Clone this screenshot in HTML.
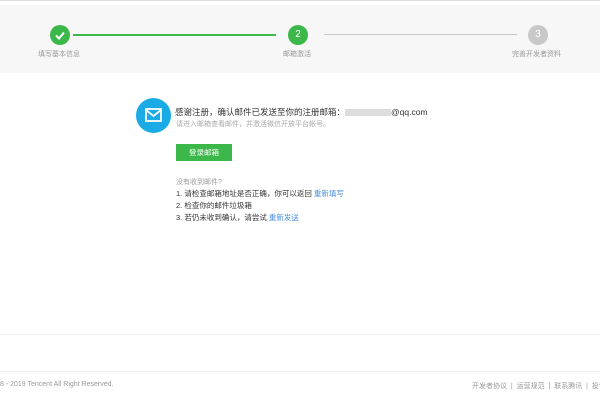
<!DOCTYPE html>
<html><head><meta charset="utf-8"><style>
*{margin:0;padding:0;box-sizing:border-box}
body{width:600px;height:400px;background:#fff;font-family:"Liberation Sans","Noto Sans CJK SC",sans-serif;position:relative;overflow:hidden}
.a{position:absolute;white-space:nowrap}
.c{position:absolute;width:20px;height:20px;border-radius:50%;color:#fff;font-size:10px;text-align:center;line-height:20px}
.lb{position:absolute;font-size:7px;color:#999;white-space:nowrap}
</style></head><body>
<div class="a" style="left:0;top:0;width:600px;height:1px;background:#ddd"></div>
<div class="a" style="left:0;top:5px;width:600px;height:68px;background:#f7f7f7"></div>
<div class="a" style="left:73px;top:34px;width:203px;height:2px;background:#3cb84a"></div>
<div class="a" style="left:324px;top:34px;width:193px;height:1px;background:#c8c8c8"></div>
<div class="c" style="left:50px;top:25px;background:#3cb84a"><svg width="20" height="20" viewBox="0 0 20 20"><path d="M6 10.5l3 3 5-6" stroke="#fff" stroke-width="2" fill="none"/></svg></div>
<div class="c" style="left:288px;top:25px;background:#3cb84a">2</div>
<div class="c" style="left:528px;top:25px;background:#c8c8c8">3</div>
<div class="lb" style="left:38px;top:49px">填写基本信息</div>
<div class="lb" style="left:283px;top:49px">邮箱激活</div>
<div class="lb" style="left:512px;top:49px">完善开发者资料</div>

<div class="a" style="left:136px;top:98px;width:35px;height:35px;border-radius:50%;background:#1aabe7"></div>
<svg class="a" style="left:145px;top:108px" width="17" height="14" viewBox="0 0 17 14"><rect x="1" y="1" width="15" height="12" fill="none" stroke="#fff" stroke-width="1.8"/><path d="M1 2l7.5 6 7.5-6" fill="none" stroke="#fff" stroke-width="1.8"/></svg>
<div class="a" style="left:175px;top:106px;font-size:8.5px;color:#333">感谢注册，确认邮件已发送至你的注册邮箱：<span style="display:inline-block;width:46px;height:7px;background:#ddd;vertical-align:middle"></span>@qq.com</div>
<div class="a" style="left:176px;top:119px;font-size:7px;color:#aaa">请进入邮箱查看邮件，并激活微信开放平台帐号。</div>
<div class="a" style="left:176px;top:144px;width:56px;height:17px;background:#3cb84a;color:#fff;font-size:7.5px;text-align:center;line-height:17px">登录邮箱</div>
<div class="a" style="left:176px;top:177px;font-size:7px;color:#999">没有收到邮件?</div>
<div class="a" style="left:176px;top:188px;font-size:7.5px;color:#333;line-height:12px">1. 请检查邮箱地址是否正确，你可以返回 <span style="color:#4a8fe0">重新填写</span><br>2. 检查你的邮件垃圾箱<br>3. 若仍未收到确认，请尝试 <span style="color:#4a8fe0">重新发送</span></div>

<div class="a" style="left:0;top:334px;width:600px;height:1px;background:#eee"></div>
<div class="a" style="left:0;top:371px;width:600px;height:1px;background:#eee"></div>
<div class="a" style="left:0;top:381px;font-size:7px;color:#999">8 - 2019 Tencent All Right Reserved.</div>
<div class="a" style="left:472px;top:381px;font-size:7px;color:#999">开发者协议 &nbsp;|&nbsp; 运营规范 &nbsp;|&nbsp; 联系腾讯 &nbsp;|&nbsp; 投诉</div>
</body></html>
